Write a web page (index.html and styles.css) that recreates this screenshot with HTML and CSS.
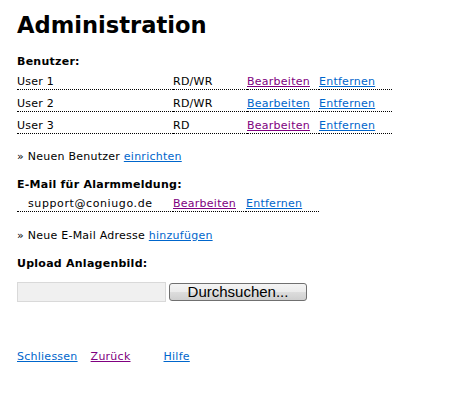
FILE: index.html
```html
<!DOCTYPE html>
<html lang="de">
<head>
<meta charset="utf-8">
<title>Administration</title>
<link rel="stylesheet" href="styles.css">
</head>
<body>
<h1 class="title">Administration</h1>

<p class="label label-users">Benutzer:</p>
<table class="list users">
  <colgroup><col class="c-name"><col class="c-rights"><col class="c-edit"><col class="c-del"></colgroup>
  <tr><td>User 1</td><td>RD/WR</td><td><a href="#" class="visited">Bearbeiten</a></td><td><a href="#">Entfernen</a></td></tr>
  <tr><td>User 2</td><td>RD/WR</td><td><a href="#">Bearbeiten</a></td><td><a href="#">Entfernen</a></td></tr>
  <tr><td>User 3</td><td>RD</td><td><a href="#" class="visited">Bearbeiten</a></td><td><a href="#">Entfernen</a></td></tr>
</table>

<p class="note note-users">» Neuen Benutzer <a href="#">einrichten</a></p>

<p class="label label-mail">E-Mail für Alarmmeldung:</p>
<table class="list mails">
  <colgroup><col class="c-mail"><col class="c-medit"><col class="c-mdel"></colgroup>
  <tr><td class="mail">support@coniugo.de</td><td><a href="#" class="visited">Bearbeiten</a></td><td><a href="#">Entfernen</a></td></tr>
</table>

<p class="note note-mail">» Neue E-Mail Adresse <a href="#">hinzufügen</a></p>

<p class="label label-upload">Upload Anlagenbild:</p>
<div class="upload">
  <span class="file-box"></span>
  <button class="file-btn" type="button">Durchsuchen...</button>
</div>

<nav class="footer">
  <a href="#" class="f-close">Schliessen</a>
  <a href="#" class="visited f-back">Zurück</a>
  <a href="#" class="f-help">Hilfe</a>
</nav>
</body>
</html>
```
FILE: styles.css
```css
html, body {
  background: #fff;
}
body {
  margin: 0;
  padding: 0 17px;
  font-family: "DejaVu Sans", Verdana, sans-serif;
  font-size: 11px;
  line-height: 13px;
  letter-spacing: 0.25px;
  color: #000;
}
a {
  color: #0066cc;
  text-decoration: underline;
}
a.visited {
  color: #800080;
}
.title {
  margin: 12px 0 0;
  font-size: 22.6px;
  line-height: 26px;
  font-weight: bold;
  letter-spacing: 0;
}
p {
  margin: 0;
}
.label {
  font-weight: bold;
}
.label-users { margin-top: 17px; }
.label-mail { margin-top: 15px; }
.label-upload { margin-top: 15px; }
.note-users { margin-top: 16px; }
.note-mail { margin-top: 17px; }

.list {
  border-collapse: collapse;
  table-layout: fixed;
}
.list td {
  padding: 7px 0 1px;
  border-bottom: 1px dotted #000;
  white-space: nowrap;
  vertical-align: bottom;
}
.users { width: 375px; }
.c-name { width: 156px; }
.c-rights { width: 74px; }
.c-edit { width: 72px; }
.c-del { width: 73px; }

.mails { width: 302px; }
.mails td { padding-top: 6px; }
.c-mail { width: 156px; }
.c-medit { width: 73px; }
.c-mdel { width: 73px; }
.mails td.mail {
  padding-left: 11px;
  letter-spacing: 0.6px;
}

.upload {
  margin-top: 12px;
  display: flex;
  align-items: flex-start;
  gap: 3px;
}
.file-box {
  display: block;
  width: 147px;
  height: 18px;
  background: #f0f0f0;
  border: 1px solid #d9d9d9;
}
.file-btn {
  margin: 1px 0 0;
  width: 138px;
  height: 18px;
  padding: 0;
  border: 1px solid #707070;
  border-radius: 3px;
  background: linear-gradient(#f4f4f4, #ebebeb 50%, #dddddd 50%, #cfcfcf);
  font-family: "Liberation Sans", Arial, sans-serif;
  font-size: 15px;
  line-height: 16px;
  letter-spacing: 0;
  color: #000;
}

.footer {
  margin-top: 48px;
  display: flex;
}
.f-close { margin-right: 13px; }
.f-back { margin-right: 33px; }
```
